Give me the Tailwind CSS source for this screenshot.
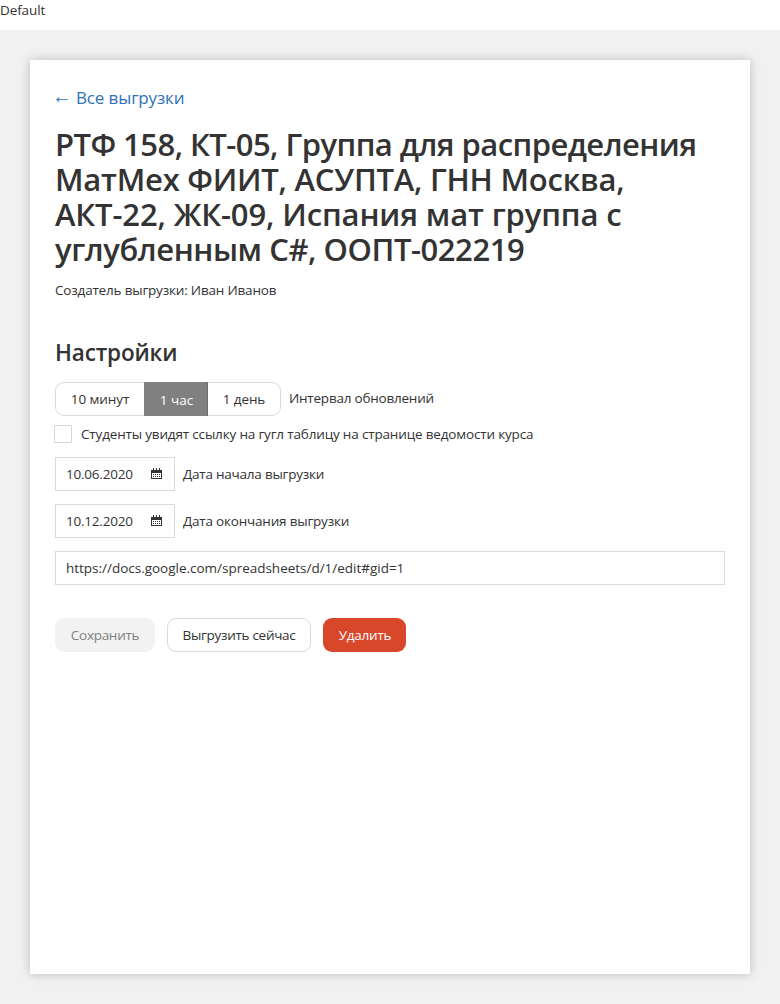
<!DOCTYPE html>
<html lang="ru">
<head>
<meta charset="utf-8">
<title>Default</title>
<script src="https://cdn.jsdelivr.net/npm/@tailwindcss/browser@4"></script>
</head>
<body class="min-h-screen bg-white font-['Open_Sans','Noto_Sans',sans-serif] text-[13.5px] leading-5 text-[#333]">
<div class="h-[30px] tracking-[-0.1px]">Default</div>
<main class="h-[974px] bg-[#f1f1f1] p-[30px]">
  <section class="h-[914px] whitespace-nowrap bg-white px-[25px] pt-[26px] shadow-[0_0_10px_rgba(0,0,0,0.22)]">
    <a class="flex h-6 text-[17px] leading-6 tracking-[-0.13px] text-[#3072b4]" href="#"><span class="-ml-[3px] w-6 font-['Liberation_Sans',sans-serif] text-[20px] leading-[21px]">←</span>Все выгрузки</a>
    <h1 class="mt-[17px] text-[31px] font-semibold leading-[35px]">
      <span class="tracking-[-0.55px]">РТФ 158, КТ-05, Группа для распределения</span><br>
      <span class="tracking-[-0.24px]">МатМех ФИИТ, АСУПТА, ГНН Москва,</span><br>
      <span class="tracking-[-0.13px]">АКТ-22, ЖК-09, Испания мат группа с</span><br>
      <span class="tracking-[-0.44px]">углубленным C#, ООПТ-022219</span>
    </h1>
    <p class="mt-[13px] tracking-[-0.19px]">Создатель выгрузки: Иван Иванов</p>
    <h2 class="mt-[38px] text-[22.5px] font-semibold leading-[30px] tracking-[-0.15px]">Настройки</h2>
    <div class="mt-[14px] flex h-[34px] items-start">
      <div class="flex h-[34px] w-[226px] rounded-[9px] border border-[#dadada]">
        <button class="w-[88px] pb-px tracking-[-0.1px]">10 минут</button>
        <button class="-my-px w-16 border-r border-[#6d6d6d] bg-[#808080] pt-px pl-0.5 text-white">1 час</button>
        <button class="w-[72px] pb-px tracking-[-0.1px]">1 день</button>
      </div>
      <span class="ml-2 mt-[6px] tracking-[-0.22px]">Интервал обновлений</span>
    </div>
    <label class="-ml-px mt-2 flex h-5 items-center">
      <span class="h-[18px] w-[18px] rounded-[1px] border border-[#d5d5d5]"></span>
      <span class="ml-[9px] tracking-[-0.165px]">Студенты увидят ссылку на гугл таблицу на странице ведомости курса</span>
    </label>
    <div class="mt-[13px] flex h-[34px] items-center">
      <div class="flex h-[34px] w-[120px] items-center justify-between border border-[#dadada] pl-[10px] pr-[12px]">
        <span class="tracking-[-0.22px]">10.06.2020</span>
        <svg class="mb-px h-[11px] w-[11px]" viewBox="0 0 11 11" fill="#333" shape-rendering="crispEdges"><path fill-rule="evenodd" d="M2 0h1v2H2zM5 0h1v2H5zM8 0h1v2H8zM0 2h11v9H0zM1 5v5h9v-5z"/><path d="M2 6h1v1H2zM4 6h1v1H4zM6 6h1v1H6zM8 6h1v1H8zM2 8h1v1H2zM4 8h1v1H4zM6 8h1v1H6zM8 8h1v1H8z"/></svg>
      </div>
      <span class="ml-2 tracking-[-0.22px]">Дата начала выгрузки</span>
    </div>
    <div class="mt-[13px] flex h-[34px] items-center">
      <div class="flex h-[34px] w-[120px] items-center justify-between border border-[#dadada] pl-[10px] pr-[12px]">
        <span class="tracking-[-0.22px]">10.12.2020</span>
        <svg class="mb-px h-[11px] w-[11px]" viewBox="0 0 11 11" fill="#333" shape-rendering="crispEdges"><path fill-rule="evenodd" d="M2 0h1v2H2zM5 0h1v2H5zM8 0h1v2H8zM0 2h11v9H0zM1 5v5h9v-5z"/><path d="M2 6h1v1H2zM4 6h1v1H4zM6 6h1v1H6zM8 6h1v1H8zM2 8h1v1H2zM4 8h1v1H4zM6 8h1v1H6zM8 8h1v1H8z"/></svg>
      </div>
      <span class="ml-2 tracking-[-0.2px]">Дата окончания выгрузки</span>
    </div>
    <div class="mt-[13px] flex h-[34px] items-center border border-[#dadada] px-[10px] tracking-[-0.015px]">https://docs.google.com/spreadsheets/d/1/edit#gid=1</div>
    <div class="mt-[33px] flex h-[34px] gap-3">
      <button class="w-[100px] rounded-[9px] bg-[#f2f2f2] tracking-[-0.28px] text-[#808080]">Сохранить</button>
      <button class="w-[144px] rounded-[9px] border border-[#dadada] tracking-[-0.3px]">Выгрузить сейчас</button>
      <button class="w-[83px] rounded-[9px] bg-[#d9472b] pl-px tracking-[-0.25px] text-white">Удалить</button>
    </div>
  </section>
</main>
</body>
</html>
